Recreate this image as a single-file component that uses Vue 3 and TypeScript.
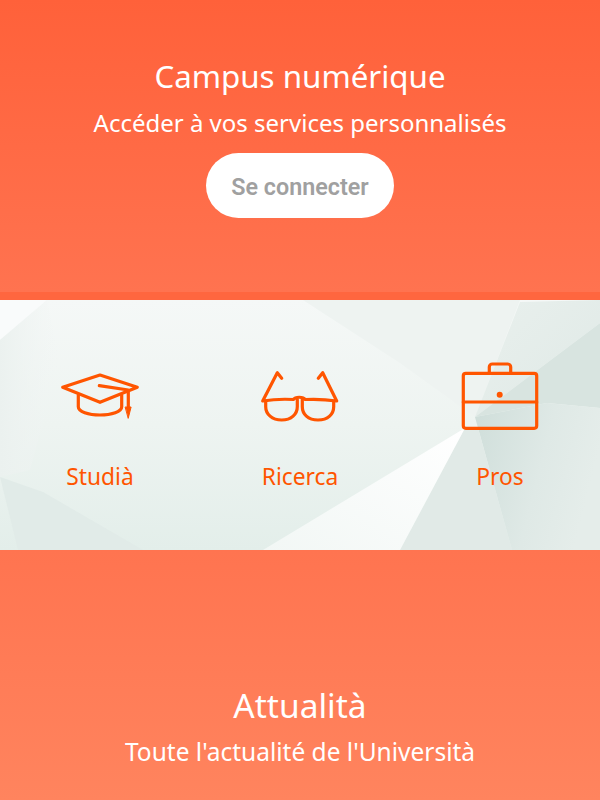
<script setup lang="ts">
const links: { label: string; icon: string }[] = [
  { label: 'Studià', icon: 'cap' },
  { label: 'Ricerca', icon: 'glasses' },
  { label: 'Pros', icon: 'case' },
]
</script>

<template>
  <div class="page">
    <section class="hero">
      <h1 class="title">Campus numérique</h1>
      <p class="sub">Accéder à vos services personnalisés</p>
      <button class="login">Se connecter</button>
    </section>
    <div class="strip"></div>
    <section class="band">
      <svg class="facets" viewBox="0 0 600 250" preserveAspectRatio="none" aria-hidden="true">
        <defs>
          <linearGradient id="base" x1="0" y1="0" x2="0" y2="1">
            <stop offset="0" stop-color="#f5f8f7" />
            <stop offset="0.5" stop-color="#eef4f1" />
            <stop offset="1" stop-color="#e3eeea" />
          </linearGradient>
          <linearGradient id="ray" x1="1" y1="0" x2="0" y2="1">
            <stop offset="0" stop-color="#ffffff" />
            <stop offset="1" stop-color="#f2f7f5" />
          </linearGradient>
          <linearGradient id="deep" x1="0" y1="0" x2="1" y2="0.3">
            <stop offset="0" stop-color="#cfdeda" />
            <stop offset="0.6" stop-color="#dfe9e6" />
            <stop offset="1" stop-color="#e5edea" />
          </linearGradient>
          <linearGradient id="upper" x1="0" y1="0" x2="1" y2="1">
            <stop offset="0" stop-color="#e9f0ed" />
            <stop offset="1" stop-color="#dfe9e6" />
          </linearGradient>
          <linearGradient id="side" x1="0" y1="0" x2="1" y2="0">
            <stop offset="0" stop-color="#ebf1ef" />
            <stop offset="1" stop-color="#f1f5f4" stop-opacity="0" />
          </linearGradient>
        </defs>
        <rect width="600" height="250" fill="url(#base)" />
        <polygon points="0,0 47,0 0,40" fill="#f9fbfb" />
        <polygon points="0,40 47,0 60,60 30,170 0,177" fill="url(#side)" />
        <polygon points="303,0 520,0 475,117 400,63" fill="#eef3f1" />
        <polygon points="520,2 600,0 600,23 475,117" fill="url(#upper)" />
        <polygon points="475,117 600,23 600,108 547,103" fill="#d8e4e0" />
        <polygon points="475,117 547,103 600,108 600,250 512,250 478,128" fill="url(#deep)" />
        <polygon points="465,128 478,128 512,250 400,250" fill="#e1eae7" />
        <polygon points="465,128 263,250 400,250" fill="url(#ray)" />
        <polygon points="0,177 43,192 143,250 18,250" fill="#e1ebe8" />
      </svg>
      <a v-for="link in links" :key="link.label" class="tile">
        <svg class="icon" viewBox="0 0 80 70" fill="none" stroke="#ff5500" stroke-width="3.2" stroke-linecap="round" stroke-linejoin="round" aria-hidden="true">
          <template v-if="link.icon === 'cap'">
            <path d="M2.700 27.300 40 15l37.300 12.300L40 42.300Z" />
            <path d="M18.300 35v11.700c0 4.800 10 8.300 21.700 8.300s21.700-3.500 21.700-8.300V35" />
            <path d="M39.300 25.700 68.300 30v18" />
            <path d="M65.500 47h5.600l-2.800 11Z" fill="#ff5500" stroke-width="1" />
          </template>
          <template v-else-if="link.icon === 'glasses'">
            <path d="M21.700 18.300 17.300 12.700 2.700 41C12 39.500 24 39 33.300 39.500c2-3 10-3 12 0 9.400-.5 21.400 0 31.400 1.500L62.700 12.700l-4.400 5.600" />
            <path d="M5.700 41.700v5C5.700 54 12 60 21.700 60s15.600-6 15.600-13.300V39.500" />
            <path d="M42.300 39.500v7.200C42.300 54 48 60 58 60s15.700-6 15.700-13.300v-5" />
          </template>
          <template v-else>
            <rect x="3.300" y="13.300" width="73.400" height="55" rx="2.500" />
            <path d="M29.300 13.300V7a3 3 0 0 1 3-3h15.400a3 3 0 0 1 3 3v6.300" />
            <path d="M3.300 42h73.400" />
            <circle cx="39.700" cy="34.700" r="3" fill="#ff5500" stroke="none" />
          </template>
        </svg>
        <span class="label">{{ link.label }}</span>
      </a>
    </section>
    <section class="news">
      <h2 class="title news-title">Attualità</h2>
      <p class="sub news-sub">Toute l'actualité de l'Università</p>
    </section>
  </div>
</template>

<style>
html, body { margin: 0; overflow: hidden; }
</style>

<style scoped>
.page {
  width: 600px;
  height: 800px;
  overflow: hidden;
  font-family: "Noto Sans", "Open Sans", sans-serif;
  color: #fff;
}
.hero {
  height: 292px;
  box-sizing: border-box;
  padding-top: 55px;
  display: flex;
  flex-direction: column;
  align-items: center;
  background: linear-gradient(180deg, #ff613a, #ff7350);
}
.strip { height: 8px; background: #ff663f; }
.title {
  margin: 0;
  font-size: 31.3px;
  line-height: 42px;
  font-weight: 400;
}
.sub {
  margin: 9px 0 0;
  font-size: 24px;
  line-height: 34px;
  font-weight: 400;
}
.login {
  margin-top: 13px;
  width: 188px;
  height: 65px;
  padding: 3px 0 0;
  border: 0;
  border-radius: 33px;
  background: #fff;
  color: #a0a0a0;
  font-family: Roboto, sans-serif;
  font-size: 23.3px;
  font-weight: 600;
}
.band {
  position: relative;
  height: 250px;
  display: grid;
  grid-template-columns: repeat(3, 1fr);
  overflow: hidden;
}
.facets { position: absolute; inset: 0; width: 100%; height: 100%; }
.tile {
  position: relative;
  display: flex;
  flex-direction: column;
  align-items: center;
  padding-top: 60px;
  color: #ff5500;
}
.icon { width: 80px; height: 70px; display: block; }
.label {
  margin-top: 31px;
  font-size: 22.8px;
  line-height: 32px;
}
.news {
  height: 250px;
  box-sizing: border-box;
  padding-top: 134px;
  display: flex;
  flex-direction: column;
  align-items: center;
  background: linear-gradient(180deg, #ff7450, #ff845e);
}
.news-title { font-size: 33.5px; }
.news-sub { margin-top: 9px; font-size: 24.5px; }
</style>
